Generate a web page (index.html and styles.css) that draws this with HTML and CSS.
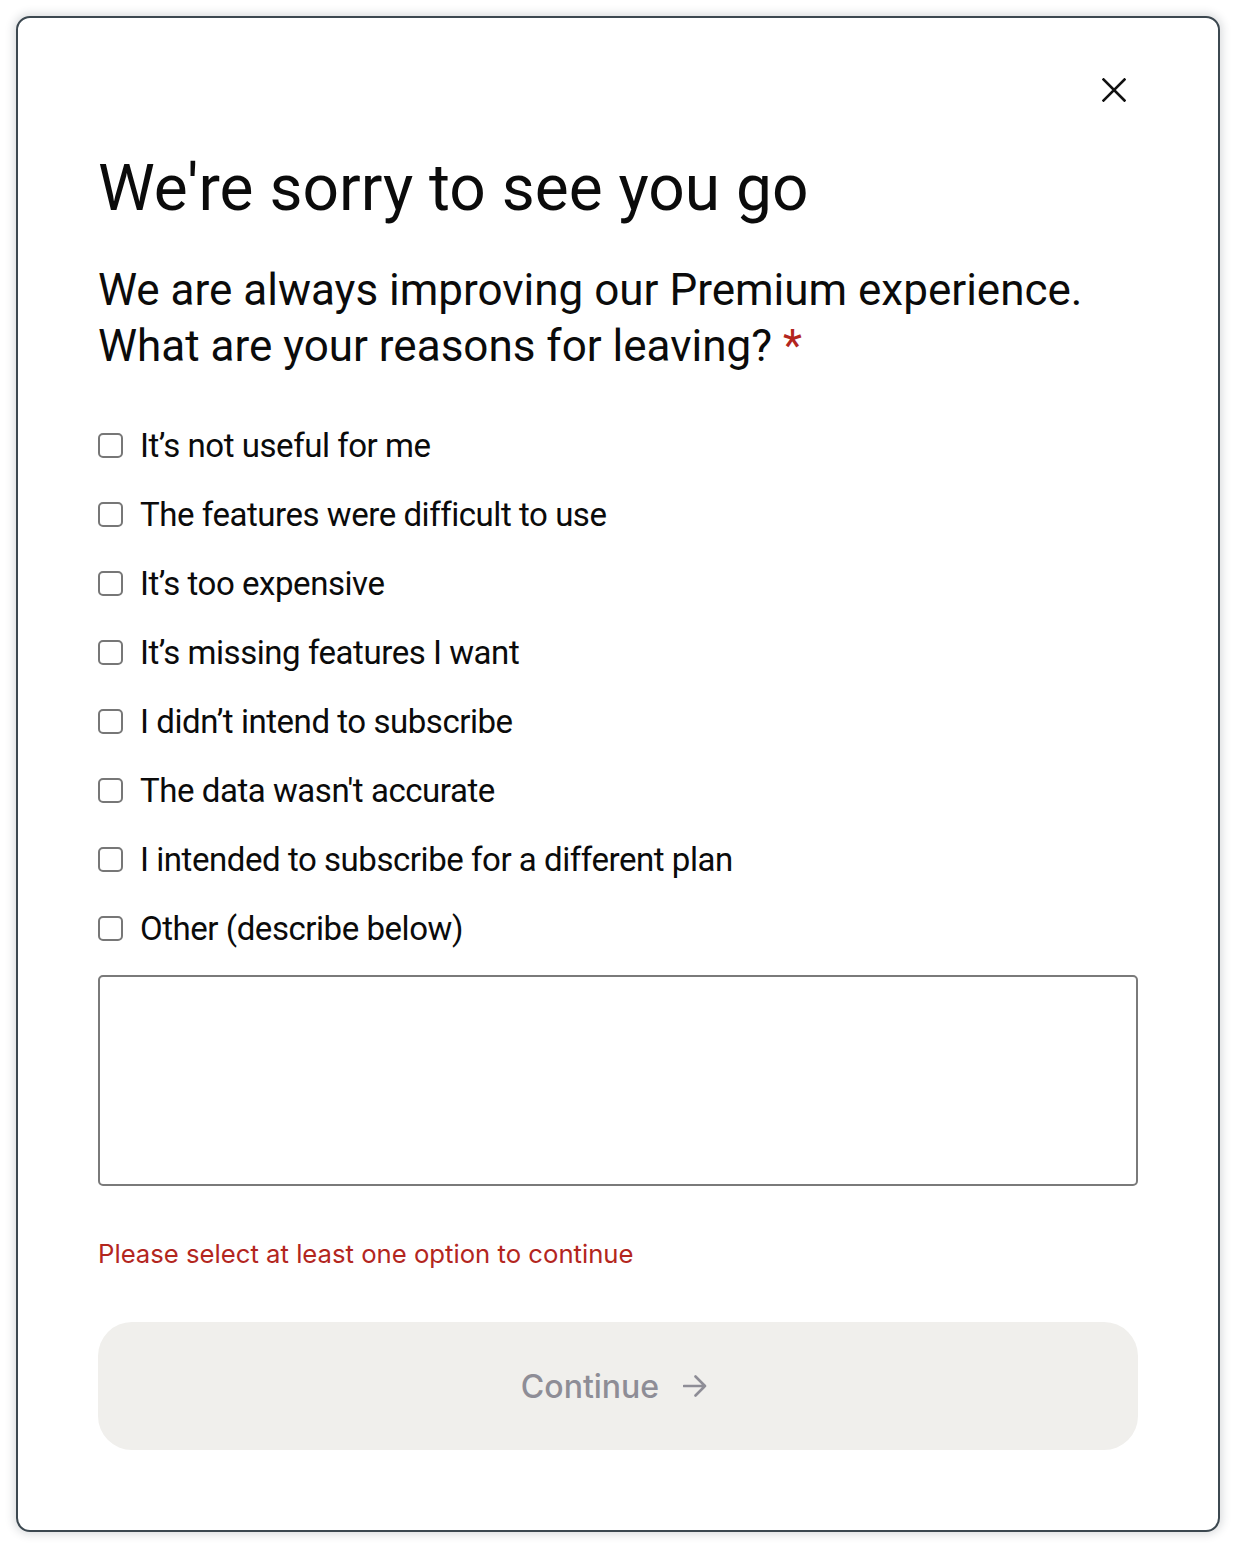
FILE: index.html
```html
<!DOCTYPE html>
<html lang="en">
<head>
<meta charset="utf-8">
<title>Cancel Premium</title>
<link rel="stylesheet" href="styles.css">
</head>
<body>
<div class="dialog" role="dialog" aria-labelledby="dlg-title">
  <div class="dialog-header">
    <button class="close-btn" type="button" aria-label="Close">
      <svg width="24" height="24" viewBox="0 0 24 24" aria-hidden="true">
        <path d="M1.5 1.5 L22.5 22.5 M22.5 1.5 L1.5 22.5" stroke="#111" stroke-width="2.6" stroke-linecap="square" fill="none"/>
      </svg>
    </button>
  </div>
  <h1 class="title" id="dlg-title">We're sorry to see you go</h1>
  <p class="question">We are always improving our Premium experience. What are your reasons for leaving? <span class="required">*</span></p>
  <ul class="options">
    <li><label class="option"><input type="checkbox" class="box"><span>It’s not useful for me</span></label></li>
    <li><label class="option"><input type="checkbox" class="box"><span>The features were difficult to use</span></label></li>
    <li><label class="option"><input type="checkbox" class="box"><span>It’s too expensive</span></label></li>
    <li><label class="option"><input type="checkbox" class="box"><span>It’s missing features I want</span></label></li>
    <li><label class="option"><input type="checkbox" class="box"><span>I didn’t intend to subscribe</span></label></li>
    <li><label class="option"><input type="checkbox" class="box"><span>The data wasn't accurate</span></label></li>
    <li><label class="option"><input type="checkbox" class="box"><span>I intended to subscribe for a different plan</span></label></li>
    <li><label class="option"><input type="checkbox" class="box"><span>Other (describe below)</span></label></li>
  </ul>
  <textarea class="details" aria-label="Describe other reason"></textarea>
  <p class="error">Please select at least one option to continue</p>
  <button class="continue" type="button" disabled>
    <span>Continue</span>
    <svg width="24" height="24" viewBox="0 0 24 24" aria-hidden="true">
      <path d="M1 12 H22 M12.5 2.5 L22 12 L12.5 21.5" stroke="#8e8d96" stroke-width="2.6" fill="none" stroke-linecap="round" stroke-linejoin="round"/>
    </svg>
  </button>
</div>
</body>
</html>
```

FILE: styles.css
```css
* { box-sizing: border-box; }

html, body {
  margin: 0;
  padding: 0;
  background: #ffffff;
}

body {
  font-family: Roboto, "Liberation Sans", Arial, sans-serif;
  color: #0b0b0b;
}

.dialog {
  margin: 16px;
  width: 1204px;
  height: 1516px;
  border: 2px solid #3c4850;
  border-radius: 14px;
  background: #ffffff;
  box-shadow: 0 0 10px 2px rgba(40, 50, 60, 0.18);
  padding: 48px 80px 80px 80px;
  display: flex;
  flex-direction: column;
}

.dialog-header {
  display: flex;
  justify-content: flex-end;
}

.close-btn {
  width: 48px;
  height: 48px;
  padding: 0;
  border: none;
  background: transparent;
  display: flex;
  align-items: center;
  justify-content: center;
  cursor: pointer;
}

.title {
  margin: 37px 0 0 0;
  font-size: 64px;
  line-height: 76px;
  font-weight: 400;
  color: #0b0b0b;
}

.question {
  margin: 35px 0 0 0;
  font-size: 44px;
  line-height: 56px;
  font-weight: 400;
  color: #0b0b0b;
}

.required {
  color: #b3261e;
}

.options {
  list-style: none;
  margin: 49px 0 0 0;
  padding: 0;
  display: flex;
  flex-direction: column;
  gap: 24px;
}

.option {
  display: flex;
  align-items: center;
  gap: 17px;
  font-size: 33px;
  letter-spacing: -0.45px;
  line-height: 45px;
  color: #0b0b0b;
  cursor: pointer;
}

.box {
  appearance: none;
  -webkit-appearance: none;
  margin: 0;
  width: 25px;
  height: 25px;
  border: 2px solid #777777;
  border-radius: 5px;
  background: #ffffff;
  flex: none;
}

.details {
  display: block;
  margin: 24px 0 0 0;
  width: 100%;
  height: 211px;
  border: 2px solid #7a7a7a;
  border-radius: 5px;
  resize: none;
  font-family: Roboto, sans-serif;
  font-size: 32px;
}

.error {
  margin: 50px 0 0 0;
  font-family: Inter, "Liberation Sans", sans-serif;
  font-size: 25.7px;
  line-height: 36px;
  color: #b3261e;
}

.continue {
  margin-top: 50px;
  width: 100%;
  height: 128px;
  border: none;
  border-radius: 34px;
  background: #f0efec;
  display: flex;
  align-items: center;
  justify-content: center;
  gap: 24px;
  padding: 0 8px 0 0;
  font-family: Inter, "Liberation Sans", sans-serif;
  font-size: 32px;
  font-weight: 500;
  color: #8e8d96;
}
```
